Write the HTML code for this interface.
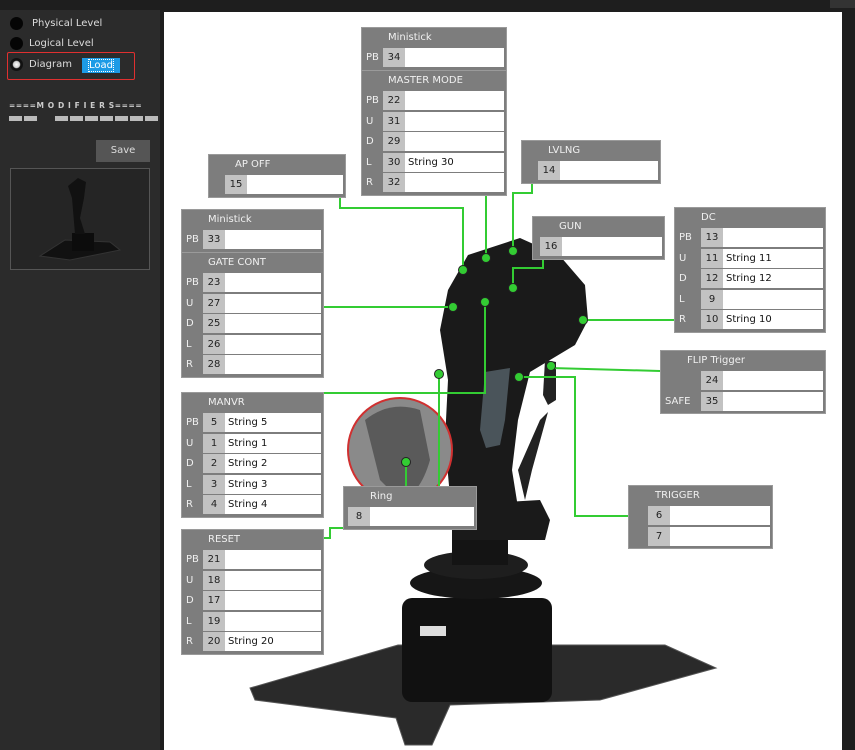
<!DOCTYPE html>
<html><head><meta charset="utf-8"><style>
*{margin:0;padding:0;box-sizing:border-box}
body{width:855px;height:750px;background:#1e1e1e;position:relative;overflow:hidden;font-family:"DejaVu Sans","Liberation Sans",sans-serif;font-size:10px}
.abs{position:absolute}
.b{position:absolute;background:#7d7d7d;border:1px solid #9a9a9a;padding-bottom:1px;color:#f0f0f0}
.t{height:20px;line-height:20px;padding-left:26px;font-size:10px}
.r{height:20.5px;display:flex;align-items:flex-start}
.l{line-height:19px;padding-left:4px;font-size:10px}
.n{width:22px;height:19px;background:#c2c2c2;color:#222;text-align:center;line-height:19px}
.f{flex:1;height:19px;background:#fff;color:#111;line-height:19px;padding-left:3px;margin-right:2px}
.side{color:#ddd;font-size:10px}
.rad{position:absolute;width:13px;height:13px;border-radius:50%;background:#050505;left:10px}
</style></head><body>
<div class="abs" style="left:0;top:10px;width:160px;height:740px;background:#2b2b2b"></div>
<div class="abs" style="left:164px;top:12px;width:678px;height:738px;background:#fff"></div>
<div class="abs" style="left:830px;top:0;width:25px;height:8px;background:#333"></div>

<div class="rad" style="top:17px"></div><div class="abs side" style="left:32px;top:18px">Physical Level</div>
<div class="rad" style="top:37px"></div><div class="abs side" style="left:29px;top:38px">Logical Level</div>
<div class="rad" style="top:58px;background:radial-gradient(circle,#fff 0,#ccc 35%,#111 45%)"></div><div class="abs side" style="left:29px;top:59px">Diagram</div>
<div class="abs" style="left:82px;top:58px;width:38px;height:15px;background:#1c9be6;color:#fff;text-align:center;line-height:15px;font-size:10px"><span style="outline:1px dotted #fff">Load</span></div>
<div class="abs" style="left:7px;top:52px;width:128px;height:28px;border:1.5px solid #e03030;border-radius:2px"></div>
<div class="abs" style="left:9px;top:101px;color:#ccc;font-size:7.5px;font-weight:bold;letter-spacing:0.6px;white-space:nowrap">====M O D I F I E R S====</div>
<div class="abs" style="left:9px;top:116px;width:13px;height:5px;background:#bbb"></div>
<div class="abs" style="left:24px;top:116px;width:13px;height:5px;background:#bbb"></div>
<div class="abs" style="left:55px;top:116px;width:104px;height:5px;background:repeating-linear-gradient(90deg,#bbb 0 13px,transparent 13px 15px)"></div>
<div class="abs" style="left:96px;top:140px;width:54px;height:22px;background:#555;color:#ddd;text-align:center;line-height:22px">Save</div>
<div class="abs" style="left:10px;top:168px;width:140px;height:102px;border:1px solid #555;background:#252525"></div>
<svg class="abs" style="left:10px;top:168px" width="140" height="102"><polygon points="30,88 55,72 100,74 110,82 60,92" fill="#111" stroke="#333"/><rect x="62" y="65" width="22" height="18" fill="#0c0c0c"/><path d="M65,66 L62,30 L58,18 L68,10 L76,14 L74,30 L70,50 L75,66Z" fill="#111"/></svg>

<svg class="abs" style="left:0;top:0" width="855" height="750">
<polygon points="250,688 398,645 665,645 716,668 600,700 450,705 432,745 405,745 396,718 255,700" fill="#2a2a2a" stroke="#555"/>
<rect x="402" y="598" width="150" height="104" rx="10" fill="#111"/>
<rect x="420" y="626" width="26" height="10" fill="#ddd"/>
<ellipse cx="476" cy="583" rx="66" ry="16" fill="#161616"/>
<ellipse cx="476" cy="565" rx="52" ry="14" fill="#1e1e1e"/>
<rect x="452" y="500" width="56" height="65" fill="#141414"/>
<path d="M452,505 L540,500 L550,520 L545,540 L452,540Z" fill="#1a1a1a"/>
<path d="M518,470 L540,420 L548,412 L532,470 L525,500Z" fill="#222"/>
<path d="M452,520 L445,440 L448,380 L440,330 L448,290 L468,255 L520,238 L560,256 L585,285 L588,320 L575,345 L550,360 L530,372 L518,420 L512,470 L520,520Z" fill="#1a1a1a"/>
<path d="M485,372 L510,368 L505,420 L500,445 L486,448 L480,430Z" fill="#4a545a"/>
<path d="M545,360 L556,362 L556,400 L548,405 L543,395Z" fill="#222"/>
<circle cx="400" cy="450" r="52" fill="#8a8a8a" stroke="#d03030" stroke-width="2"/>
<path d="M365,420 Q390,400 420,410 L430,460 Q420,495 400,500 L380,480Z" fill="#5a5a5a"/>
<g fill="none" stroke="#3c3" stroke-width="2">
<polyline points="340,196 340,208 463,208 463,270"/>
<polyline points="486,193 486,258"/>
<polyline points="532,182 532,193 513,193 513,251"/>
<polyline points="543,259 543,268 513,268 513,288"/>
<polyline points="324,307 453,307"/>
<polyline points="583,320 674,320"/>
<polyline points="324,393 485,393 485,302"/>
<polyline points="406,462 406,486"/>
<polyline points="439,374 439,528 330,528 330,538 324,538"/>
<polyline points="551,368 660,371"/>
<polyline points="519,377 575,377 575,516 628,516"/>
</g>
<g fill="#3c3" stroke="#222" stroke-width="1">
<circle cx="463" cy="270" r="4.5"/><circle cx="486" cy="258" r="4.5"/><circle cx="513" cy="251" r="4.5"/><circle cx="513" cy="288" r="4.5"/><circle cx="453" cy="307" r="4.5"/><circle cx="583" cy="320" r="4.5"/><circle cx="485" cy="302" r="4.5"/><circle cx="406" cy="462" r="4.5"/><circle cx="439" cy="374" r="4.5"/><circle cx="551" cy="366" r="4.5"/><circle cx="519" cy="377" r="4.5"/>
</g>
</svg>

<div class="b" style="left:361px;top:27px;width:146px"><div class="t">Ministick</div>
<div class="r"><span class="l" style="width:21px">PB</span><span class="n">34</span><span class="f"></span></div></div>

<div class="b" style="left:361px;top:70px;width:146px"><div class="t">MASTER MODE</div>
<div class="r"><span class="l" style="width:21px">PB</span><span class="n">22</span><span class="f"></span></div>
<div class="r"><span class="l" style="width:21px">U</span><span class="n">31</span><span class="f"></span></div>
<div class="r"><span class="l" style="width:21px">D</span><span class="n">29</span><span class="f"></span></div>
<div class="r"><span class="l" style="width:21px">L</span><span class="n">30</span><span class="f">String 30</span></div>
<div class="r"><span class="l" style="width:21px">R</span><span class="n">32</span><span class="f"></span></div></div>

<div class="b" style="left:208px;top:154px;width:138px"><div class="t">AP OFF</div>
<div class="r"><span class="l" style="width:16px"></span><span class="n">15</span><span class="f"></span></div></div>

<div class="b" style="left:521px;top:140px;width:140px"><div class="t">LVLNG</div>
<div class="r"><span class="l" style="width:16px"></span><span class="n">14</span><span class="f"></span></div></div>

<div class="b" style="left:181px;top:209px;width:143px"><div class="t">Ministick</div>
<div class="r"><span class="l" style="width:21px">PB</span><span class="n">33</span><span class="f"></span></div></div>

<div class="b" style="left:181px;top:252px;width:143px"><div class="t">GATE CONT</div>
<div class="r"><span class="l" style="width:21px">PB</span><span class="n">23</span><span class="f"></span></div>
<div class="r"><span class="l" style="width:21px">U</span><span class="n">27</span><span class="f"></span></div>
<div class="r"><span class="l" style="width:21px">D</span><span class="n">25</span><span class="f"></span></div>
<div class="r"><span class="l" style="width:21px">L</span><span class="n">26</span><span class="f"></span></div>
<div class="r"><span class="l" style="width:21px">R</span><span class="n">28</span><span class="f"></span></div></div>

<div class="b" style="left:532px;top:216px;width:133px"><div class="t">GUN</div>
<div class="r"><span class="l" style="width:7px"></span><span class="n">16</span><span class="f"></span></div></div>

<div class="b" style="left:674px;top:207px;width:152px"><div class="t">DC</div>
<div class="r"><span class="l" style="width:26px">PB</span><span class="n">13</span><span class="f"></span></div>
<div class="r"><span class="l" style="width:26px">U</span><span class="n">11</span><span class="f">String 11</span></div>
<div class="r"><span class="l" style="width:26px">D</span><span class="n">12</span><span class="f">String 12</span></div>
<div class="r"><span class="l" style="width:26px">L</span><span class="n">9</span><span class="f"></span></div>
<div class="r"><span class="l" style="width:26px">R</span><span class="n">10</span><span class="f">String 10</span></div></div>

<div class="b" style="left:660px;top:350px;width:166px"><div class="t">FLIP Trigger</div>
<div class="r"><span class="l" style="width:40px"></span><span class="n">24</span><span class="f"></span></div>
<div class="r"><span class="l" style="width:40px">SAFE</span><span class="n">35</span><span class="f"></span></div></div>

<div class="b" style="left:181px;top:392px;width:143px"><div class="t">MANVR</div>
<div class="r"><span class="l" style="width:21px">PB</span><span class="n">5</span><span class="f">String 5</span></div>
<div class="r"><span class="l" style="width:21px">U</span><span class="n">1</span><span class="f">String 1</span></div>
<div class="r"><span class="l" style="width:21px">D</span><span class="n">2</span><span class="f">String 2</span></div>
<div class="r"><span class="l" style="width:21px">L</span><span class="n">3</span><span class="f">String 3</span></div>
<div class="r"><span class="l" style="width:21px">R</span><span class="n">4</span><span class="f">String 4</span></div></div>

<div class="b" style="left:343px;top:486px;width:134px"><div class="t">Ring</div>
<div class="r"><span class="l" style="width:4px;padding:0"></span><span class="n">8</span><span class="f"></span></div></div>

<div class="b" style="left:628px;top:485px;width:145px"><div class="t">TRIGGER</div>
<div class="r"><span class="l" style="width:19px"></span><span class="n">6</span><span class="f"></span></div>
<div class="r"><span class="l" style="width:19px"></span><span class="n">7</span><span class="f"></span></div></div>

<div class="b" style="left:181px;top:529px;width:143px"><div class="t">RESET</div>
<div class="r"><span class="l" style="width:21px">PB</span><span class="n">21</span><span class="f"></span></div>
<div class="r"><span class="l" style="width:21px">U</span><span class="n">18</span><span class="f"></span></div>
<div class="r"><span class="l" style="width:21px">D</span><span class="n">17</span><span class="f"></span></div>
<div class="r"><span class="l" style="width:21px">L</span><span class="n">19</span><span class="f"></span></div>
<div class="r"><span class="l" style="width:21px">R</span><span class="n">20</span><span class="f">String 20</span></div></div>
</body></html>
